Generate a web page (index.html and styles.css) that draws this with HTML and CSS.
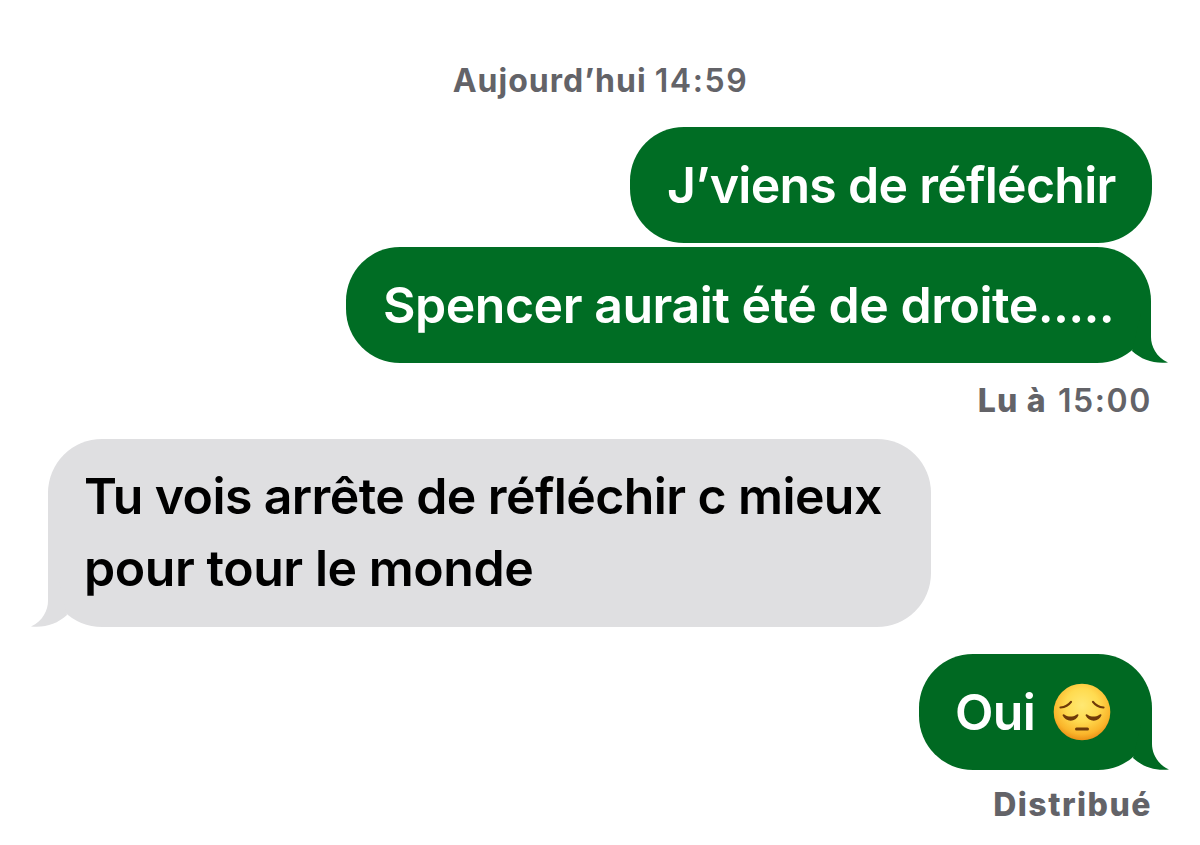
FILE: index.html
```
<!DOCTYPE html>
<html lang="fr">
<head>
<meta charset="utf-8">
<title>Messages</title>
<link rel="stylesheet" href="styles.css">
</head>
<body>
<main class="thread">
  <div class="stamp"><b class="stamp-day">Aujourd’hui</b> <span class="time">14:59</span></div>
  <div class="bubble sent first"><span class="t1">J’viens de réfléchir</span></div>
  <div class="bubble sent second"><span class="t2">Spencer aurait été de droite<span class="dots">.....</span></span>
    <svg class="tail" viewBox="0 0 58 60"><path d="M30 10L40 0V34C40 43 45 54 57 59.500C43 61 31 57 21 48Z"/></svg>
  </div>
  <div class="status read"><b class="read-label">Lu à</b> <span class="time">15:00</span></div>
  <div class="bubble received"><span class="t3">Tu vois arrête de réfléchir c mieux</span><br><span class="t4">pour tour le monde</span>
    <svg class="tail" viewBox="0 0 58 60"><path d="M30 10L40 0V34C40 43 45 54 57 59.500C43 61 31 57 21 48Z"/></svg>
  </div>
  <div class="bubble sent third"><span class="t5">Oui</span>
    <svg class="emoji" viewBox="0 0 58 58">
      <defs>
        <radialGradient id="face" cx=".5" cy=".38" r=".64">
          <stop offset="0" stop-color="#ffe873"/><stop offset=".45" stop-color="#ffdb50"/><stop offset=".8" stop-color="#fab52b"/><stop offset="1" stop-color="#e88a13"/>
        </radialGradient>
      </defs>
      <circle cx="29" cy="29" r="28.300" fill="url(#face)"/>
      <g fill="none" stroke="#6f3a08" stroke-width="2.200" stroke-linecap="round">
        <path d="M7.500 24.500C12 24 16 21.500 18 18.800M50.500 24.500C46 24 42 21.500 40 18.800"/>
        <path d="M23.500 46H34.500" stroke-width="3"/>
      </g>
      <path fill="#6f3a08" d="M9.500 32.300C9.800 30.800 11 31 12 31.900C15 34 20 34 23 31.900C24.200 31 25.500 31 25.500 32.300C23 39.500 12.500 39.500 9.500 32.300ZM32.500 32.300C32.800 30.800 34 31 35 31.900C38 34 43 34 46 31.900C47.200 31 48.500 31 48.500 32.300C46 39.500 35.500 39.500 32.500 32.300Z"/>
    </svg>
    <svg class="tail" viewBox="0 0 58 60"><path d="M30 10L40 0V34C40 43 45 54 57 59.500C43 61 31 57 21 48Z"/></svg>
  </div>
  <div class="status delivered"><b class="delivered-label">Distribué</b></div>
</main>
</body>
</html>
```
FILE: styles.css
```
body {
  margin: 0;
  background: #fff;
  font-family: Inter, "Liberation Sans", sans-serif;
}
.thread {
  box-sizing: border-box;
  width: 1200px;
  height: 845px;
  padding: 61px 48px 0;
  display: flex;
  flex-direction: column;
  align-items: flex-end;
  overflow: hidden;
}
.stamp, .status {
  height: 40px;
  font-size: 32px;
  line-height: 40px;
  font-weight: 600;
  color: #636368;
  white-space: nowrap;
}
.stamp { align-self: center; margin-bottom: 26px; }
b { font-weight: 700; }
.stamp-day { letter-spacing: 1px; }
.time { font-weight: 600; letter-spacing: 1.6px; margin-right: -1px; }
.read-label { font-weight: 800; letter-spacing: 1.2px; margin-right: 3px; }
.delivered-label { font-weight: 800; letter-spacing: 1.5px; margin-right: -1px; }
.bubble {
  position: relative;
  box-sizing: border-box;
  height: 116px;
  padding: 22px 37px;
  border-radius: 54px;
  font-size: 50px;
  line-height: 72px;
  font-weight: 600;
  white-space: nowrap;
}
.sent { background: #006d24; color: #fff; }
.first { width: 522px; margin-bottom: 4px; }
.second { width: 805px; margin-right: 1px; }
.third { display: flex; width: 233px; padding-left: 36px; background: #006922; }
.t1 { letter-spacing: -0.73px; }
.t2 { letter-spacing: -0.48px; }
.dots { letter-spacing: -0.7px; }
.t3 { letter-spacing: -0.6px; }
.t4 { letter-spacing: -0.45px; }
.t5 { width: 98px; letter-spacing: -0.7px; }
.received {
  align-self: flex-start;
  width: 883px;
  height: 188px;
  margin: 18px 0 27px;
  padding-left: 36px;
  padding-top: 21px;
  background: #dfdfe1;
  color: #000;
}
.tail {
  position: absolute;
  right: -18px;
  bottom: 0;
  width: 58px;
  height: 60px;
  fill: #006d24;
}
.third .tail { fill: #006922; }
.received .tail {
  right: auto;
  left: -18px;
  fill: #dfdfe1;
  transform: scaleX(-1);
}
.emoji { width: 58px; height: 58px; margin-top: 7px; flex: none; }
.read { margin-top: 18px; margin-right: 1px; }
.delivered { margin-top: 15px; margin-right: 1px; }
```
